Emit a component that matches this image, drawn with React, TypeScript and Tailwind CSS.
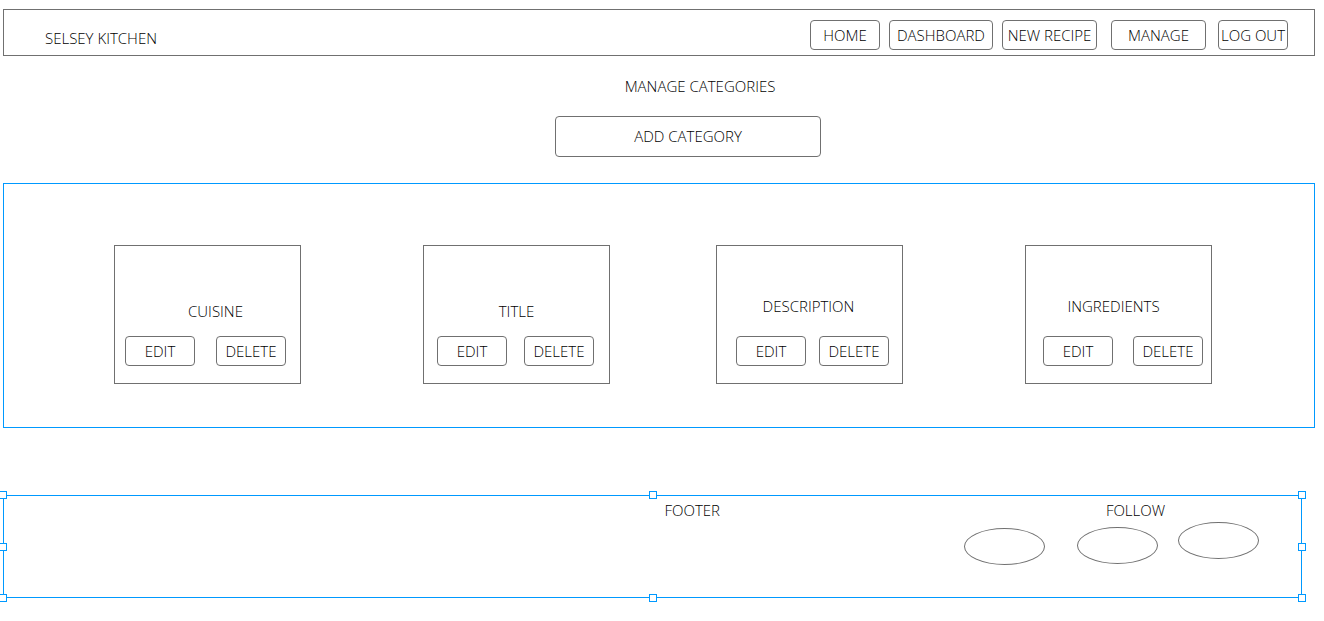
const outline = 'border border-[#707070] bg-white';

type Category = {
  name: string;
  titleClass: string;
  actionsClass: string;
};

const categoryGroups: Category[][] = [
  [
    { name: 'CUISINE', titleClass: 'pt-[55px] pb-[15px] pl-4', actionsClass: 'pl-2.5 pr-3.5' },
    { name: 'TITLE', titleClass: 'pt-[55px] pb-[15px]', actionsClass: 'pl-[13px] pr-[15px]' },
  ],
  [
    { name: 'DESCRIPTION', titleClass: 'pt-[50px] pb-5 pr-0.5', actionsClass: 'pl-[19px] pr-[13px]' },
    { name: 'INGREDIENTS', titleClass: 'pt-[50px] pb-5 pr-2.5', actionsClass: 'pl-[17px] pr-2' },
  ],
];

const navItems = [
  { label: 'HOME', className: 'w-[70px]' },
  { label: 'DASHBOARD', className: 'ml-[9px] w-[104px]' },
  { label: 'NEW RECIPE', className: 'ml-[9px] w-[95px]' },
  { label: 'MANAGE', className: 'ml-3.5 w-[95px]' },
  { label: 'LOG OUT', className: 'ml-3 w-[70px]' },
];

const socialLinks = [
  { label: 'Facebook', className: 'mt-1.5' },
  { label: 'Instagram', className: 'mt-[5px] ml-8' },
  { label: 'Twitter', className: 'ml-5' },
];

const handles = [
  'left-0 top-0',
  'left-1/2 top-0',
  'left-full top-0',
  'left-0 top-1/2',
  'left-full top-1/2',
  'left-0 top-full',
  'left-1/2 top-full',
  'left-full top-full',
];

function CategoryCard({ name, titleClass, actionsClass }: Category) {
  const button = `h-[30px] w-[70px] rounded ${outline}`;
  return (
    <article className={`w-[187px] pb-[17px] ${outline}`}>
      <h2 className={`text-center ${titleClass}`}>{name}</h2>
      <div className={`flex justify-between ${actionsClass}`}>
        <button type="button" className={button}>EDIT</button>
        <button type="button" className={button}>DELETE</button>
      </div>
    </article>
  );
}

export default function App() {
  return (
    <div className="overflow-x-hidden bg-white pt-[9px] pb-5 pl-[3px] font-['Open_Sans','Noto_Sans',sans-serif] text-[15px] leading-5 font-light whitespace-nowrap text-black">
      <header className={`mr-[9px] flex justify-between pt-2.5 pr-[26px] pb-[5px] pl-[41px] ${outline}`}>
        <a href="#home" className="pt-2">SELSEY KITCHEN</a>
        <nav className="flex">
          {navItems.map((item) => (
            <a
              key={item.label}
              href="#"
              className={`flex h-[30px] items-center justify-center rounded ${outline} ${item.className}`}
            >
              {item.label}
            </a>
          ))}
        </nav>
      </header>

      <main className="mr-[9px]">
        <div className="flex flex-col items-center pt-5 pb-[26px] pl-[58px]">
          <h1 className="pl-6">MANAGE CATEGORIES</h1>
          <button type="button" className={`mt-5 h-[41px] w-[266px] rounded pb-0.5 ${outline}`}>
            ADD CATEGORY
          </button>
        </div>

        <section className="flex flex-wrap justify-between gap-y-8 border border-[#0099ff] pt-[61px] pr-[102px] pb-[43px] pl-[110px]">
          {categoryGroups.map((group) => (
            <div key={group[0].name} className="flex gap-[122px]">
              {group.map((category) => (
                <CategoryCard key={category.name} {...category} />
              ))}
            </div>
          ))}
        </section>
      </main>

      <footer className="relative mt-[67px] mr-[22px] border border-[#0099ff] pt-1 pb-8">
        <div className="ml-[50%] flex justify-between pr-[42px] pl-3">
          <p>FOOTER</p>
          <div>
            <p className="pl-12 text-center">FOLLOW</p>
            <div className="mt-0.5 flex items-start">
              {socialLinks.map((link) => (
                <a
                  key={link.label}
                  href="#"
                  aria-label={link.label}
                  className={`h-[37px] w-[81px] rounded-[50%] ${outline} ${link.className}`}
                />
              ))}
            </div>
          </div>
        </div>
        <div className="pointer-events-none absolute -inset-px">
          {handles.map((position) => (
            <span
              key={position}
              className={`absolute size-2 -translate-x-1/2 -translate-y-1/2 border border-[#0099ff] bg-white ${position}`}
            />
          ))}
        </div>
      </footer>
    </div>
  );
}
